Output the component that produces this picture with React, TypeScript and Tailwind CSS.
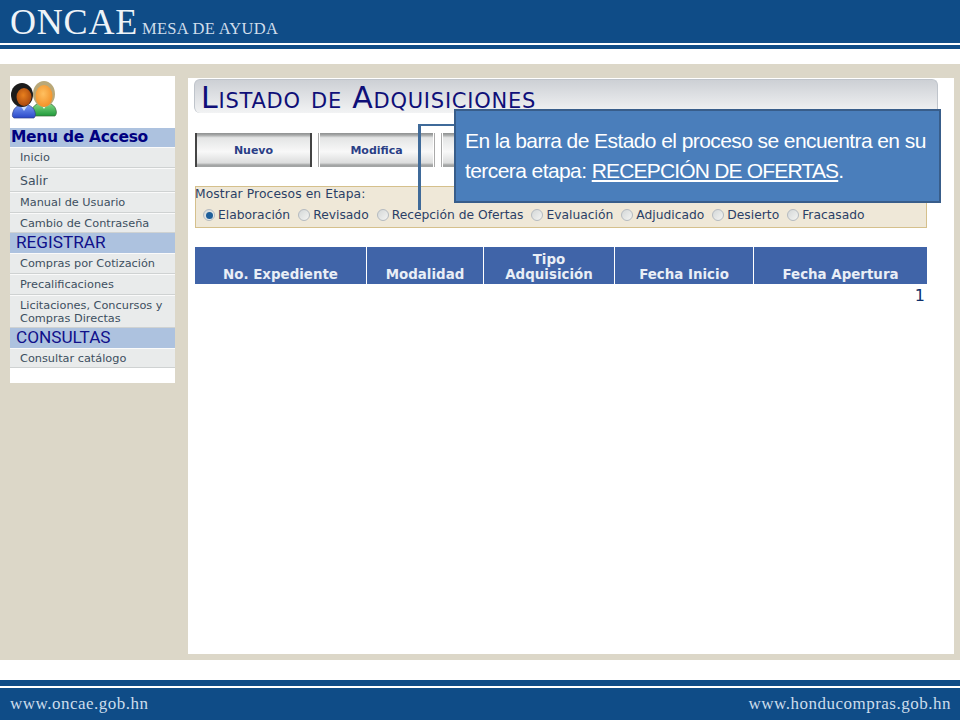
const verdana = "font-['DejaVu_Sans',Verdana,sans-serif]";

function People() {
  return (
    <svg width="46" height="38" viewBox="0 0 46 38" className="block">
      <defs>
        <linearGradient id="g1" x1="0" y1="0" x2="0" y2="1"><stop offset="0" stopColor="#8fe08f" /><stop offset="1" stopColor="#1f9a3a" /></linearGradient>
        <linearGradient id="b1" x1="0" y1="0" x2="0" y2="1"><stop offset="0" stopColor="#7a9cf5" /><stop offset="1" stopColor="#2a48c8" /></linearGradient>
        <radialGradient id="o1" cx="0.45" cy="0.4" r="0.7"><stop offset="0" stopColor="#ffc060" /><stop offset="1" stopColor="#f08a20" /></radialGradient>
        <radialGradient id="o2" cx="0.45" cy="0.4" r="0.7"><stop offset="0" stopColor="#e8801e" /><stop offset="1" stopColor="#a0400c" /></radialGradient>
      </defs>
      <path d="M23 35c-2-1-3-3-2-6 1-4 4-6 8-7l4-1 4 1c4 1 7 3 8 7 1 3 0 5-1 6z" fill="url(#g1)" stroke="#3d6b3d" strokeWidth="0.7" />
      <path d="M29 22l4 6 4-6z" fill="#e6f5e6" />
      <ellipse cx="33" cy="13" rx="11" ry="13" fill="#b9a878" />
      <ellipse cx="33" cy="15" rx="8.500" ry="11" fill="url(#o1)" />
      <path d="M3 37c-2-1-2-3-1-6 1-4 4-6 7-7h8c3 1 6 3 7 7 1 3 0 5-1 6z" fill="url(#b1)" stroke="#32408a" strokeWidth="0.7" />
      <path d="M9 24l4 6 4-6z" fill="#cfe0fa" />
      <ellipse cx="11" cy="14" rx="11" ry="12" fill="#1c1c1c" />
      <ellipse cx="13" cy="16" rx="7.500" ry="9" fill="url(#o2)" />
    </svg>
  );
}

function Radio({ checked, label }: { checked?: boolean; label: string }) {
  return (
    <span className="flex items-center gap-[3px]">
      <span className="relative flex h-[12px] w-[12px] items-center justify-center rounded-full border border-[#b4bac0] bg-gradient-to-br from-[#d4d8d8] to-[#f4f4f2]">
        {checked && <span className="h-[7px] w-[7px] rounded-full bg-[#1f5f9a]" />}
      </span>
      <span>{label}</span>
    </span>
  );
}

function MenuHead({ children, big }: { children: string; big?: boolean }) {
  return big ? (
    <div className="flex h-[19px] items-center bg-[#adc2df] pl-[1px] text-[15.500px] font-bold text-[#000080] font-['DejaVu_Sans',sans-serif] leading-none tracking-[-0.3px]">{children}</div>
  ) : (
    <div className="flex h-[20px] items-center bg-[#adc2df] pl-[6px] text-[17.200px] text-[#10108a] font-['Roboto',sans-serif] leading-none">{children}</div>
  );
}

function MenuItem({ children, h, size }: { children: React.ReactNode; h: string; size?: string }) {
  return (
    <div className={`flex items-center border-b border-b-[#cfd2d2] border-t border-t-[#fafafa] bg-[#e9ebeb] pl-[10px] text-[#3d4f60] leading-[13px] ${h} ${size ?? "text-[11.300px]"}`}>
      <span>{children}</span>
    </div>
  );
}

function Btn({ label, dark }: { label: string; dark?: boolean }) {
  return (
    <div className={`flex h-[34px] w-[117px] ${dark ? "border-x-2 border-x-[#444]" : "border-x border-x-[#aaa] px-[1px]"}`}>
      <div className="flex flex-1 items-center justify-center bg-[linear-gradient(180deg,#8f9191_0%,#a5a7a7_6%,#e4e5e5_14%,#f8f8f8_55%,#dcdddd_88%,#a3a5a5_94%,#a3a5a5_100%)] pt-[3px] text-[11px] font-semibold text-[#2b3f86]">
        {label}
      </div>
    </div>
  );
}

function Th({ w, children }: { w: string; children: React.ReactNode }) {
  return (
    <div className={`flex flex-col justify-end bg-[#4064a8] pb-[2px] text-center text-[13.400px] font-bold leading-[15px] text-[#e9eef6] ${w}`}>{children}</div>
  );
}

export default function App() {
  return (
    <div className={`relative flex h-[720px] w-[960px] flex-col overflow-hidden bg-white ${verdana}`}>
      <header className="flex h-[49px] flex-col bg-[#0f4c87]">
        <div className="flex h-[43px] items-end pl-[10px] font-['Liberation_Serif',serif] text-[#eef3f8]">
          <span className="text-[36px] leading-[42px] tracking-[0.8px]">ONCAE</span>
          <span className="ml-[4px] pb-[5px] text-[16.500px] leading-[18px] tracking-[0.3px] text-[#cfdeec]">MESA DE AYUDA</span>
        </div>
        <div className="h-[2px] bg-white" />
      </header>

      <div className="h-[15px]" />

      <main className="flex h-[596px] items-start bg-[#dcd7c8] pl-[10px] pt-[12px]">
        <aside className="w-[165px] bg-white pb-[15px]">
          <div className="h-[52px] pl-[1px] pt-[5px]"><People /></div>
          <MenuHead big>Menu de Acceso</MenuHead>
          <MenuItem h="h-[21px]">Inicio</MenuItem>
          <MenuItem h="h-[24px]" size="text-[12.500px]">Salir</MenuItem>
          <MenuItem h="h-[21px]">Manual de Usuario</MenuItem>
          <MenuItem h="h-[20px]">Cambio de Contraseña</MenuItem>
          <MenuHead>REGISTRAR</MenuHead>
          <MenuItem h="h-[21px]">Compras por Cotización</MenuItem>
          <MenuItem h="h-[21px]">Precalificaciones</MenuItem>
          <MenuItem h="h-[33px]">Licitaciones, Concursos y<br />Compras Directas</MenuItem>
          <MenuHead>CONSULTAS</MenuHead>
          <MenuItem h="h-[20px]">Consultar catálogo</MenuItem>
        </aside>

        <section className="ml-[13px] mt-[2px] h-[576px] w-[766px] bg-white pl-[6px] pt-[1px]">
          <h1 className="flex h-[34px] w-[744px] items-end rounded-t-[6px] rounded-bl-[6px] border-l border-r border-t border-[#bfc4cb] bg-gradient-to-b from-[#cdd0d5] to-[#f2f3f4] pl-[6px] text-[30px] font-normal leading-[30px] tracking-[0.75px] text-[#0f0f78] [font-variant-caps:small-caps]">
            Listado de Adquisiciones
          </h1>
          <div className="mt-[20px] flex gap-[6px] pl-[1px]">
            <Btn label="Nuevo" dark />
            <Btn label="Modifica" />
            <Btn label="" />
          </div>
          <div className="ml-[1px] mt-[19px] h-[42px] w-[732px] border border-[#d5c08c] bg-[#efe8d8] text-[12.300px] leading-[14px] text-[#2b3f66]">
            <div className="-ml-[1px] tracking-[0.1px]">Mostrar Procesos en Etapa:</div>
            <div className="mt-[7px] flex gap-[8px] pl-[7px]">
              <Radio checked label="Elaboración" />
              <Radio label="Revisado" />
              <Radio label="Recepción de Ofertas" />
              <Radio label="Evaluación" />
              <Radio label="Adjudicado" />
              <Radio label="Desierto" />
              <Radio label="Fracasado" />
            </div>
          </div>
          <div className="ml-[1px] mt-[19px] flex h-[37px] w-[732px] gap-[1px]">
            <Th w="w-[171px]">No. Expediente</Th>
            <Th w="w-[116px]">Modalidad</Th>
            <Th w="w-[130px]">Tipo<br />Adquisición</Th>
            <Th w="w-[138px]">Fecha Inicio</Th>
            <Th w="w-[173px]">Fecha Apertura</Th>
          </div>
          <div className="mt-[2px] w-[731px] text-right text-[16px] leading-[19px] text-[#0f2f6a]">1</div>
        </section>
      </main>

      <footer className="mt-[20px] flex h-[40px] flex-col bg-[#0f4c87]">
        <div className="mt-[6px] h-[2px] bg-white" />
        <div className="flex flex-1 items-center justify-between pl-[10px] pr-[9px] font-['Liberation_Serif',serif] text-[17px] leading-[20px] tracking-[0.5px] text-[#cbdcec]">
          <span>www.oncae.gob.hn</span>
          <span>www.honducompras.gob.hn</span>
        </div>
      </footer>

      <div className="absolute left-[418px] top-[124px] h-[86px] w-[36px] border-l-[3px] border-t-[2px] border-l-[#3f6a99] border-t-[#3f6a99]" />
      <div className="absolute left-[454px] top-[109px] flex h-[94px] w-[487px] flex-col justify-center border-2 border-[#385d8a] bg-[#4a7ebb] pl-[9px] font-['Liberation_Sans',sans-serif] text-[21px] leading-[30px] tracking-[-0.58px] text-white">
        <div>En la barra de Estado el proceso se encuentra en su</div>
        <div>tercera etapa: <span className="underline tracking-[-0.82px]">RECEPCIÓN DE OFERTAS</span>.</div>
      </div>
    </div>
  );
}
